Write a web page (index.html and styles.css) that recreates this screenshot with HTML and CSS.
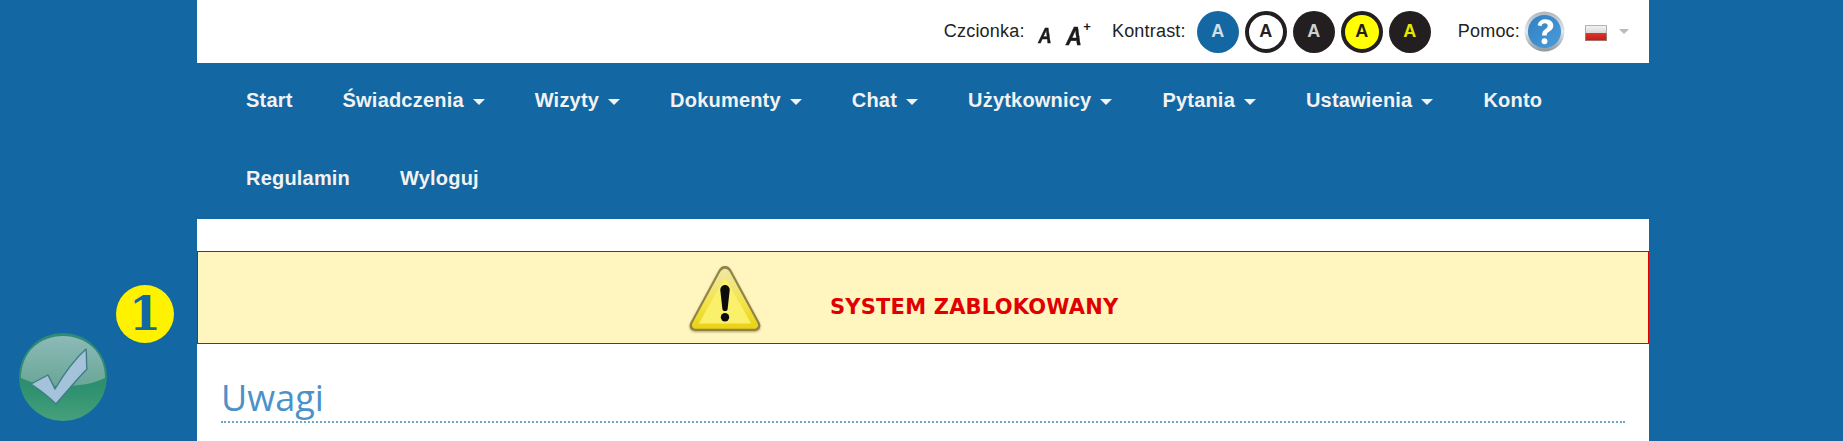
FILE: index.html
```html
<!DOCTYPE html>
<html lang="pl">
<head>
<meta charset="utf-8">
<title>Uwagi</title>
<link rel="stylesheet" href="styles.css">
</head>
<body>
<div class="side-badge">1</div>
<svg class="side-check" viewBox="0 0 90 90" aria-hidden="true">
  <defs>
    <linearGradient id="g1" x1="0" y1="0" x2="0" y2="1"><stop offset="0" stop-color="#2f8a78"/><stop offset="0.6" stop-color="#2c8f6e"/><stop offset="1" stop-color="#46a07c"/></linearGradient>
    <linearGradient id="g2" x1="0" y1="0" x2="0" y2="1"><stop offset="0" stop-color="#8dbab8"/><stop offset="1" stop-color="#6aa697"/></linearGradient>
  </defs>
  <circle cx="45" cy="45" r="44" fill="url(#g1)"/>
  <path d="M3 46C3 20 22 4 45 4s42 16 42 42c-12 6-26 8-42 8S15 52 3 46z" fill="url(#g2)"/>
  <path d="M13 52l17-9 7 14C47 40 58 26 68 17c1 7 0 13 1 20C60 46 50 58 38 72 31 65 22 58 13 52z" fill="#a4c2da" stroke="#3f7d85" stroke-width="1.4" stroke-linejoin="round"/>
</svg>
<div class="page">
  <header class="topbar">
    <span class="label">Czcionka:</span>
    <span class="font-a">A</span>
    <span class="font-b">A</span><sup class="font-plus">+</sup>
    <span class="label label-contrast">Kontrast:</span>
    <div class="contrast">
      <span class="dot dot-blue">A</span>
      <span class="dot dot-white">A</span>
      <span class="dot dot-dark">A</span>
      <span class="dot dot-yellow">A</span>
      <span class="dot dot-darkyellow">A</span>
    </div>
    <span class="label label-help">Pomoc:</span>
    <svg class="help" viewBox="0 0 42 42" aria-hidden="true">
      <defs>
        <linearGradient id="h1" x1="0" y1="0" x2="0" y2="1"><stop offset="0" stop-color="#aeb8c0"/><stop offset="0.5" stop-color="#e4e8ea"/><stop offset="1" stop-color="#8c969e"/></linearGradient>
        <linearGradient id="h2" x1="0" y1="0" x2="1" y2="1"><stop offset="0" stop-color="#2f7fc4"/><stop offset="1" stop-color="#4d9cd8"/></linearGradient>
      </defs>
      <circle cx="21" cy="21" r="20.5" fill="url(#h1)"/>
      <circle cx="21" cy="21" r="17" fill="url(#h2)"/>
      <path d="M14 14.500c1-4 4-6 8-6 5 0 8 3 8 6.500 0 3-2 4.500-4 6-2 1.300-2.700 2-2.700 4h-4.800c0-3.500 1.200-5 3.500-6.600 1.500-1 2.300-1.900 2.300-3.200 0-1.500-1.200-2.600-3-2.600-1.800 0-3 1-3.500 3z" fill="#fff"/>
      <circle cx="21" cy="31" r="3" fill="#fff"/>
    </svg>
    <svg class="flag" viewBox="0 0 22 16" aria-hidden="true">
      <defs>
        <linearGradient id="f1" x1="0" y1="0" x2="0" y2="1"><stop offset="0" stop-color="#f6f6f6"/><stop offset="1" stop-color="#d9d9d9"/></linearGradient>
        <linearGradient id="f2" x1="0" y1="0" x2="0" y2="1"><stop offset="0" stop-color="#e0352a"/><stop offset="1" stop-color="#bd1d14"/></linearGradient>
      </defs>
      <rect width="22" height="8" fill="url(#f1)"/>
      <rect y="8" width="22" height="8" fill="url(#f2)"/>
      <rect x="0.500" y="0.500" width="21" height="15" fill="none" stroke="#999" stroke-opacity="0.700"/>
    </svg>
    <span class="flag-caret"></span>
  </header>

  <nav class="nav">
    <a class="nav-item">Start</a>
    <a class="nav-item">Świadczenia<i class="caret"></i></a>
    <a class="nav-item">Wizyty<i class="caret"></i></a>
    <a class="nav-item">Dokumenty<i class="caret"></i></a>
    <a class="nav-item">Chat<i class="caret"></i></a>
    <a class="nav-item">Użytkownicy<i class="caret"></i></a>
    <a class="nav-item">Pytania<i class="caret"></i></a>
    <a class="nav-item">Ustawienia<i class="caret"></i></a>
    <a class="nav-item">Konto</a>
    <a class="nav-item">Regulamin</a>
    <a class="nav-item">Wyloguj</a>
  </nav>

  <section class="alert">
    <svg class="warn" viewBox="1 1 70 65" aria-hidden="true">
      <defs>
        <linearGradient id="w1" x1="0" y1="0" x2="0" y2="1"><stop offset="0" stop-color="#efe7a8"/><stop offset="0.6" stop-color="#f4e346"/><stop offset="1" stop-color="#e8d212"/></linearGradient>
      </defs>
      <path d="M36 2c3 0 5 2 6 4l27 50c2 4 0 8-5 8H8c-5 0-7-4-5-8L30 6c1-2 3-4 6-4z" fill="#8f8244"/>
      <path d="M36 4.500c2 0 3.500 1.300 4.500 3l26.500 49c1.500 3 0 5.500-3.500 5.500h-55c-3.500 0-5-2.500-3.500-5.500l26.500-49c1-1.700 2.500-3 4.500-3z" fill="url(#w1)"/>
      <path d="M36 13L61 57H11z" fill="#fbf06a"/>
      <path d="M31.500 25c0-3 2-5 4.500-5s4.500 2 4.500 5l-2 18c-.3 1.500-1.300 2-2.500 2s-2.200-.5-2.500-2z" fill="#0c0c0c"/>
      <circle cx="36" cy="51" r="4" fill="#0c0c0c"/>
    </svg>
    <strong class="alert-text">SYSTEM ZABLOKOWANY</strong>
  </section>

  <main class="content">
    <h1 class="title">Uwagi</h1>
  </main>
</div>
</body>
</html>
```

FILE: styles.css
```css
* {
  box-sizing: border-box;
}

html,
body {
  height: 100%;
}

body {
  margin: 0;
  background: #1367a3;
  font-family: "Liberation Sans", Arial, sans-serif;
  color: #222;
  overflow: hidden;
}

.page {
  width: 1452px;
  min-height: 441px;
  margin-left: 197px;
  background: #fff;
}

.side-badge {
  position: absolute;
  left: 116px;
  top: 285px;
  width: 58px;
  height: 58px;
  border-radius: 50%;
  background: #fff200;
  color: #1367a3;
  font: bold 46px/58px "DejaVu Serif", serif;
  text-align: center;
}

.side-check {
  position: absolute;
  left: 18px;
  top: 332px;
  width: 90px;
  height: 90px;
}

/* Top bar */
.topbar {
  height: 63px;
  display: flex;
  align-items: center;
  justify-content: flex-end;
  padding-right: 20px;
}

.label {
  font-size: 18px;
  letter-spacing: 0.2px;
  color: #222;
}

.font-a,
.font-b {
  font-weight: bold;
  font-style: italic;
  color: #1b1b1b;
  line-height: 1;
  transform: scaleX(0.85);
  -webkit-text-stroke: 0.4px #1b1b1b;
  position: relative;
  top: 4px;
}

.font-a {
  font-size: 22px;
  margin-left: 12px;
}

.font-b {
  font-size: 26px;
  margin-left: 13px;
  transform-origin: left center;
}

.font-plus {
  font-size: 13px;
  font-weight: bold;
  line-height: 1;
  margin: 0 0 10px -1px;
  color: #1b1b1b;
}

.label-contrast {
  margin-left: 21px;
}

.contrast {
  display: flex;
  gap: 6px;
  margin-left: 11px;
}

.dot {
  width: 42px;
  height: 42px;
  border-radius: 50%;
  display: flex;
  align-items: center;
  justify-content: center;
  font-size: 18px;
  font-weight: bold;
}

.dot-blue {
  background: #1367a3;
  color: #d3dde6;
}

.dot-white {
  background: #fff;
  border: 4px solid #231f20;
  color: #231f20;
}

.dot-dark {
  background: #231f20;
  color: #d0d0d0;
}

.dot-yellow {
  background: #ff0;
  border: 4px solid #231f20;
  color: #231f20;
}

.dot-darkyellow {
  background: #231f20;
  color: #e6e600;
}

.label-help {
  margin-left: 27px;
}

.help {
  width: 41px;
  height: 41px;
  margin-left: 4px;
}

.flag {
  width: 22px;
  height: 16px;
  margin-left: 20px;
  position: relative;
  top: 1px;
}

.flag-caret {
  width: 0;
  height: 0;
  margin-left: 12px;
  border-left: 5px solid transparent;
  border-right: 5px solid transparent;
  border-top: 5px solid #bbb;
}

/* Navigation */
.nav {
  background: #1367a3;
  padding-left: 24px;
  display: flex;
  flex-wrap: wrap;
}

.nav-item {
  height: 78px;
  padding: 0 25px 3px;
  display: flex;
  align-items: center;
  font-size: 20px;
  font-weight: bold;
  letter-spacing: 0.2px;
  color: #f2f2f2;
}

.caret {
  width: 0;
  height: 0;
  margin-left: 9px;
  margin-top: 3px;
  border-left: 6.500px solid transparent;
  border-right: 6.500px solid transparent;
  border-top: 6px solid #f2f2f2;
}

/* Alert */
.alert {
  height: 93px;
  margin-top: 32px;
  background: #fff6bf;
  border: 1px solid #e00000;
  display: flex;
  align-items: center;
  padding-left: 490px;
}

.warn {
  width: 74px;
  height: 68px;
  margin-top: 3px;
  filter: drop-shadow(0 1px 1px rgba(90, 80, 30, 0.5));
}

.alert-text {
  margin-left: 68px;
  margin-top: 18px;
  font-family: "DejaVu Sans", Verdana, sans-serif;
  font-size: 21px;
  font-weight: bold;
  letter-spacing: 0.2px;
  color: #e00000;
}

/* Content */
.content {
  padding: 0 24px;
}

.title {
  margin: 30px 0 0;
  height: 49px;
  font-family: "Open Sans", "Noto Sans", sans-serif;
  font-size: 36px;
  font-weight: 400;
  line-height: 47px;
  color: #4a92c9;
  border-bottom: 2px dotted #6ea6d0;
}
```
